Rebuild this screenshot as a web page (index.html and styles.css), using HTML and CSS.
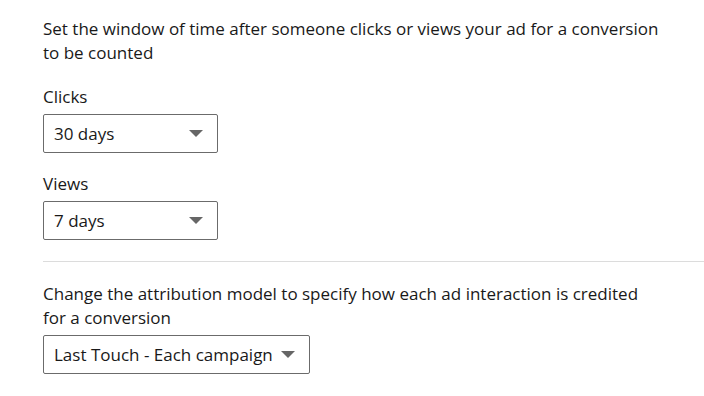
FILE: index.html
```html
<!DOCTYPE html>
<html lang="en">
<head>
  <meta charset="UTF-8">
  <title>Conversion settings</title>
  <link rel="stylesheet" href="styles.css">
</head>
<body>

<section class="block">
  <p class="lead">Set the window of time after someone clicks or views your ad for a conversion to be counted</p>

  <div class="field">
    <label for="clicks">Clicks</label>
    <div class="select small" id="clicks">
      <span>30 days</span>
      <svg class="caret" width="14" height="8" viewBox="0 0 14 8"><path d="M0 0h14L7 7z"/></svg>
    </div>
  </div>

  <div class="field">
    <label for="views">Views</label>
    <div class="select small" id="views">
      <span>7 days</span>
      <svg class="caret" width="14" height="8" viewBox="0 0 14 8"><path d="M0 0h14L7 7z"/></svg>
    </div>
  </div>
</section>

<hr class="divider">

<section class="block">
  <p class="lead tight">Change the attribution model to specify how each ad interaction is credited for a conversion</p>
  <div class="select wide">
    <span>Last Touch - Each campaign</span>
    <svg class="caret" width="14" height="8" viewBox="0 0 14 8"><path d="M0 0h14L7 7z"/></svg>
  </div>
</section>

</body>
</html>
```

FILE: styles.css
```css
body {
  font-family: "Open Sans", "Noto Sans", sans-serif;
  font-size: 17px;
  color: #191919;
  margin: 0;
  padding: 17px 0 0 43px;
  background: #fff;
}
.block {
  padding-right: 40px;
}
.lead {
  margin: 0 0 20px;
  line-height: 24px;
  max-width: 625px;
}
.lead.tight {
  margin-bottom: 5px;
}
.field {
  margin-bottom: 19px;
}
.field:last-child {
  margin-bottom: 21px;
}
.field label {
  display: block;
  line-height: 24px;
  margin-bottom: 5px;
}
.select {
  box-sizing: border-box;
  height: 39px;
  border: 1px solid #6b6b6b;
  border-radius: 2px;
  display: flex;
  align-items: center;
  justify-content: space-between;
  padding: 0 14px 0 10px;
}
.select.small {
  width: 175px;
}
.select.wide {
  width: 267px;
}
.caret {
  fill: #666;
}
.divider {
  border: none;
  border-top: 1px solid #dcdcdc;
  margin: 0 0 20px;
}
```
